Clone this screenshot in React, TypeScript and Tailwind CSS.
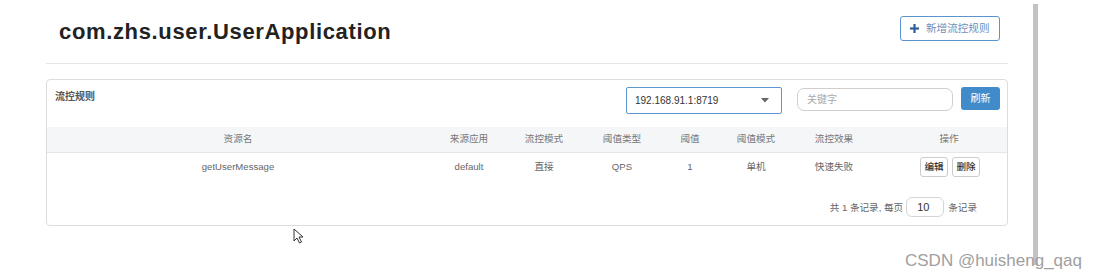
import React from "react";

const F = "font-['Liberation_Sans','Noto_Sans_CJK_SC',sans-serif]";

const cols = [
  { label: "资源名", w: "w-[382px]", v: "getUserMessage" },
  { label: "来源应用", w: "w-[80px]", v: "default" },
  { label: "流控模式", w: "w-[70px]", v: "直接" },
  { label: "阈值类型", w: "w-[86px]", v: "QPS" },
  { label: "阈值", w: "w-[50px]", v: "1" },
  { label: "阈值模式", w: "w-[82px]", v: "单机" },
  { label: "流控效果", w: "w-[74px]", v: "快速失败" },
];

export default function App() {
  return (
    <div className={`relative w-[1095px] h-[280px] bg-white overflow-hidden ${F}`}>
      <div className="flex">
        <div className="ml-[46px] w-[962px]">
          {/* header */}
          <div className="h-[64px] flex items-start justify-between border-b border-[#e5e5e5]">
            <h1 className="ml-[13px] mt-[21px] text-[22px] leading-[22px] font-bold tracking-[0.65px] text-[#222]">
              com.zhs.user.UserApplication
            </h1>
            <button className="mt-[16px] mr-[8px] h-[25px] w-[100px] flex items-center pl-[9px] border border-[#5b93cc] rounded-[3px] bg-white">
              <svg width="9" height="9" viewBox="0 0 9 9" className="mr-[7px]">
                <rect x="3.4" y="0" width="2.2" height="9" fill="#2f5f96" />
                <rect x="0" y="3.4" width="9" height="2.2" fill="#2f5f96" />
              </svg>
              <span className="text-[10.6px] leading-none text-[#6f8fb8]">新增流控规则</span>
            </button>
          </div>

          {/* panel */}
          <div className="mt-[15px] h-[147px] border border-[#dddddd] rounded-[4px] flex flex-col">
            <div className="h-[47px] flex items-start">
              <div className="ml-[8px] mt-[11px] text-[10px] leading-[12px] font-semibold text-[#555]">流控规则</div>
              <div className="ml-auto mt-[7px] w-[156px] h-[27px] border border-[#5e97d0] rounded-[2px] flex items-center pl-[8px] pr-[12px]">
                <span className="text-[10px] text-[#333]">192.168.91.1:8719</span>
                <svg width="8" height="5" viewBox="0 0 8 5" className="ml-auto">
                  <path d="M0 0 L8 0 L4 4.5 Z" fill="#666" />
                </svg>
              </div>
              <div className="ml-[15px] mt-[8px] w-[156px] h-[23px] border border-[#cfcfcf] rounded-[7px] flex items-center pl-[9px]">
                <span className="text-[10px] text-[#aaa]">关键字</span>
              </div>
              <button className="ml-[8px] mr-[7px] mt-[7px] w-[39px] h-[23px] rounded-[3px] bg-[#428bca] text-white text-[10px] flex items-center justify-center">
                刷新
              </button>
            </div>

            <div className="h-[26px] bg-[#f5f6f7] border-b border-[#e6e6e6] flex items-center text-[9.6px] text-[#777]">
              {cols.map((c) => (
                <div key={c.label} className={`${c.w} text-center`}>{c.label}</div>
              ))}
              <div className="w-[136px] pl-[20px] text-center">操作</div>
            </div>

            <div className="h-[28px] flex items-center text-[9.6px] text-[#666]">
              {cols.map((c) => (
                <div key={c.label} className={`${c.w} text-center`}>{c.v}</div>
              ))}
              <div className="w-[136px] pl-[22px] flex justify-center gap-[4px]">
                <span className="w-[28px] h-[20px] border border-[#cccccc] rounded-[3px] flex items-center justify-center text-[9.6px] text-[#333] font-medium">编辑</span>
                <span className="w-[28px] h-[20px] border border-[#cccccc] rounded-[3px] flex items-center justify-center text-[9.6px] text-[#333] font-medium">删除</span>
              </div>
            </div>

            <div className="flex-1 flex items-start justify-end pr-[30px] pt-[16px] text-[9.6px] text-[#666]">
              <span className="mt-[4px]">共 1 条记录, 每页</span>
              <div className="ml-[3px] w-[38px] h-[20px] border border-[#d5d5d5] rounded-[6px] flex items-center pl-[10px] text-[11px] text-[#333]">10</div>
              <span className="ml-[4px] mt-[4px]">条记录</span>
            </div>
          </div>
        </div>

        {/* right vertical bar */}
        <div className="ml-[25px] mt-[4px] w-[5px] h-[261px] bg-[#c3c3c3]" />
      </div>

      {/* cursor */}
      <svg className="absolute left-[293px] top-[228px]" width="12" height="16" viewBox="0 0 12 16">
        <path d="M1 1 L1 13 L4 10 L6.5 15 L8.5 14 L6 9 L10 9 Z" fill="#fff" stroke="#333" strokeWidth="1" strokeLinejoin="round" />
      </svg>

      {/* watermark */}
      <div className="absolute left-[905px] top-[252px] text-[17px] leading-[17px] text-[#a0a0a0] font-['Liberation_Sans',sans-serif]">
        CSDN @huisheng_qaq
      </div>
    </div>
  );
}
